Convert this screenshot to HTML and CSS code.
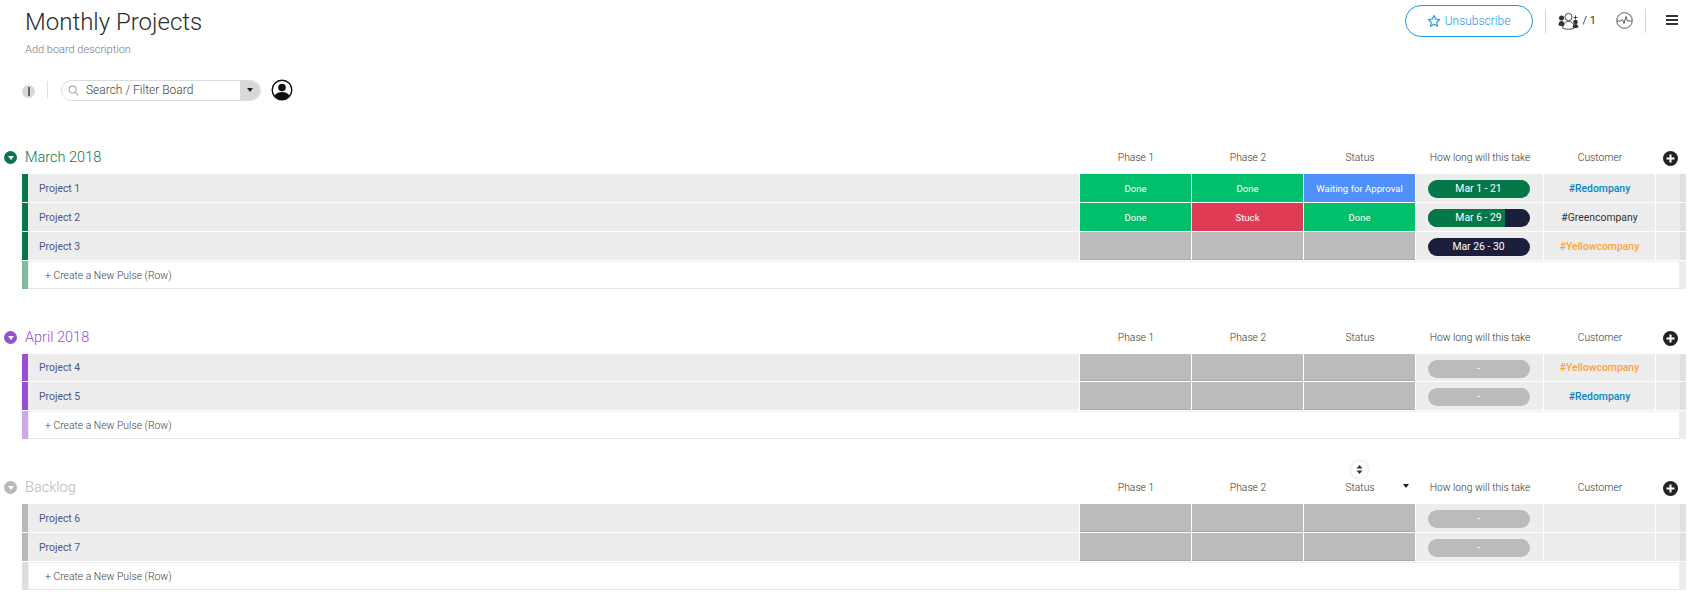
FILE: index.html
```html
<!DOCTYPE html>
<html lang="en">
<head>
    <meta charset="UTF-8">
    <title>Monthly Projects</title>
    <link rel="stylesheet" href="styles.css">
</head>
<body>
    <header class="board-header">
        <div class="board-title">
            <h1>Monthly Projects</h1>
            <p>Add board description</p>
        </div>
        <div class="board-actions">
            <button class="subscribe">
                <svg width="14" height="14" viewBox="0 0 24 24" fill="none" stroke="#1b9ae4" stroke-width="2" stroke-linejoin="round"><path d="M12 2.5l2.9 6.2 6.8.8-5 4.6 1.3 6.7-6-3.4-6 3.4 1.3-6.7-5-4.6 6.8-.8z"/></svg>
                Unsubscribe
            </button>
            <span class="divider"></span>
            <svg class="people" width="21" height="20" viewBox="0 0 21 20">
                <circle cx="10.5" cy="6" r="3.6" fill="none" stroke="#333" stroke-width="0.9"/>
                <path d="M4.5 17c1-5 3-6.5 6-6.5s5 1.500 6 6.500c-3.500 1.700-8.500 1.700-12 0z" fill="none" stroke="#333" stroke-width="0.9"/>
                <circle cx="3.500" cy="7" r="2.500" fill="#333"/>
                <path d="M0.500 14c0-2.500 1.300-4 3-4s3 1.500 3 4c-1 1.500-5 1.500-6 0z" fill="#333"/>
                <circle cx="17.500" cy="11" r="2.300" fill="#333"/>
                <path d="M14.500 16c.5-2 1.500-3 3-3s2.500 1 3 3c-1 1.300-5 1.300-6 0z" fill="#333"/>
                <path d="M17.500 4.500v4M15.500 6.500h4" stroke="#333" stroke-width="0.9"/>
            </svg>
            <span class="people-count">/ 1</span>
            <svg class="pulse" width="17" height="17" viewBox="0 0 17 17" fill="none" stroke="#333" stroke-width="0.8">
                <circle cx="8.500" cy="8.500" r="7.800"/>
                <path d="M1 9h4l1.500-1.500 1.500 4 2-7 1.500 4.500h4.500"/>
            </svg>
            <span class="divider"></span>
            <div class="hamburger"><i></i><i></i><i></i></div>
        </div>
    </header>

    <div class="toolbar">
        <span class="info-btn"><i></i></span>
        <span class="toolbar-divider"></span>
        <div class="search">
            <svg width="11" height="11" viewBox="0 0 12 12" fill="none" stroke="#aaa" stroke-width="1.200"><circle cx="5" cy="5" r="3.800"/><path d="M8 8l3.300 3.300"/></svg>
            <span class="search-text">Search / Filter Board</span>
            <span class="search-drop"><i class="caret"></i></span>
        </div>
        <svg class="person" width="22" height="22" viewBox="0 0 22 22">
            <circle cx="11" cy="11" r="9.800" fill="#fff" stroke="#111" stroke-width="1.400"/>
            <circle cx="11" cy="8.500" r="3.800" fill="#111"/>
            <path d="M3.500 17c1.500-3 4-4 7.500-4s6 1 7.500 4c-2 2.700-4.500 4-7.500 4s-5.500-1.300-7.500-4z" fill="#111"/>
        </svg>
    </div>

    <section class="group group-march">
        <div class="group-head">
            <div class="group-name">
                <span class="toggle"><i></i></span>
                <h2>March 2018</h2>
            </div>
            <span>Phase 1</span><span>Phase 2</span><span>Status</span><span>How long will this take</span><span>Customer</span>
            <span class="add"><svg width="15" height="15" viewBox="0 0 15 15"><circle cx="7.500" cy="7.500" r="7.500" fill="#222"/><path d="M7.500 3.500v8M3.500 7.500h8" stroke="#fff" stroke-width="2"/></svg></span>
        </div>
        <div class="row">
            <div class="cell name">Project 1</div>
            <div class="cell status done">Done</div>
            <div class="cell status done">Done</div>
            <div class="cell status waiting">Waiting for Approval</div>
            <div class="cell"><div class="timeline green">Mar 1 - 21</div></div>
            <div class="cell customer red">#Redompany</div>
            <div class="cell end"></div>
        </div>
        <div class="row">
            <div class="cell name">Project 2</div>
            <div class="cell status done">Done</div>
            <div class="cell status stuck">Stuck</div>
            <div class="cell status done">Done</div>
            <div class="cell"><div class="timeline navy"><span class="fill" style="width: 76%"></span><b>Mar 6 - 29</b></div></div>
            <div class="cell customer">#Greencompany</div>
            <div class="cell end"></div>
        </div>
        <div class="row">
            <div class="cell name">Project 3</div>
            <div class="cell status empty"></div>
            <div class="cell status empty"></div>
            <div class="cell status empty"></div>
            <div class="cell"><div class="timeline navy">Mar 26 - 30</div></div>
            <div class="cell customer yellow">#Yellowcompany</div>
            <div class="cell end"></div>
        </div>
        <div class="create"><div class="create-text">+ Create a New Pulse (Row)</div></div>
    </section>

    <section class="group group-april">
        <div class="group-head">
            <div class="group-name">
                <span class="toggle"><i></i></span>
                <h2>April 2018</h2>
            </div>
            <span>Phase 1</span><span>Phase 2</span><span>Status</span><span>How long will this take</span><span>Customer</span>
            <span class="add"><svg width="15" height="15" viewBox="0 0 15 15"><circle cx="7.500" cy="7.500" r="7.500" fill="#222"/><path d="M7.500 3.500v8M3.500 7.500h8" stroke="#fff" stroke-width="2"/></svg></span>
        </div>
        <div class="row">
            <div class="cell name">Project 4</div>
            <div class="cell status empty"></div>
            <div class="cell status empty"></div>
            <div class="cell status empty"></div>
            <div class="cell"><div class="timeline none">-</div></div>
            <div class="cell customer yellow">#Yellowcompany</div>
            <div class="cell end"></div>
        </div>
        <div class="row">
            <div class="cell name">Project 5</div>
            <div class="cell status empty"></div>
            <div class="cell status empty"></div>
            <div class="cell status empty"></div>
            <div class="cell"><div class="timeline none">-</div></div>
            <div class="cell customer red">#Redompany</div>
            <div class="cell end"></div>
        </div>
        <div class="create"><div class="create-text">+ Create a New Pulse (Row)</div></div>
    </section>

    <section class="group group-backlog">
        <div class="group-head">
            <div class="group-name">
                <span class="toggle"><i></i></span>
                <h2>Backlog</h2>
            </div>
            <span>Phase 1</span><span>Phase 2</span>
            <span class="sortable">Status
                <span class="sort-btn"><svg width="7" height="9" viewBox="0 0 7 9" fill="#333"><path d="M3.500 0l3 3.500h-6zM3.500 9l3-3.500h-6z"/></svg></span>
                <i class="caret col-caret"></i>
            </span>
            <span>How long will this take</span><span>Customer</span>
            <span class="add"><svg width="15" height="15" viewBox="0 0 15 15"><circle cx="7.500" cy="7.500" r="7.500" fill="#222"/><path d="M7.500 3.500v8M3.500 7.500h8" stroke="#fff" stroke-width="2"/></svg></span>
        </div>
        <div class="row">
            <div class="cell name">Project 6</div>
            <div class="cell status empty"></div>
            <div class="cell status empty"></div>
            <div class="cell status empty"></div>
            <div class="cell"><div class="timeline none">-</div></div>
            <div class="cell customer"></div>
            <div class="cell end"></div>
        </div>
        <div class="row">
            <div class="cell name">Project 7</div>
            <div class="cell status empty"></div>
            <div class="cell status empty"></div>
            <div class="cell status empty"></div>
            <div class="cell"><div class="timeline none">-</div></div>
            <div class="cell customer"></div>
            <div class="cell end"></div>
        </div>
        <div class="create"><div class="create-text">+ Create a New Pulse (Row)</div></div>
    </section>
</body>
</html>
```

FILE: styles.css
```css
* {
    box-sizing: border-box;
}

body {
    margin: 0;
    background: #fff;
    font-family: Roboto, "Liberation Sans", sans-serif;
    color: #333;
    overflow: hidden;
}

/* top of the board */
.board-header {
    display: flex;
    justify-content: space-between;
    height: 72px;
    padding: 5px 26px 0 25px;
}

.board-title h1 {
    margin: 0;
    font-size: 24px;
    font-weight: 300;
    line-height: 34px;
    color: #2b2b2b;
}

.board-title p {
    margin: 4px 0 0;
    font-size: 11px;
    font-weight: 300;
    line-height: 14px;
    color: #777;
}

.board-actions {
    display: flex;
    align-items: center;
    height: 31px;
}

.subscribe {
    display: flex;
    align-items: center;
    justify-content: center;
    gap: 4px;
    width: 128px;
    height: 32px;
    padding: 0;
    background: #fff;
    border: 1px solid #1b9ae4;
    border-radius: 16px;
    font-family: inherit;
    font-size: 12px;
    font-weight: 300;
    color: #1b9ae4;
}

.divider {
    width: 1px;
    height: 24px;
    margin: 0 12px;
    background: #d5d5d5;
}

.people-count {
    margin: 0 20px 0 4px;
    font-size: 11px;
    color: #333;
}

.hamburger {
    width: 12px;
    margin-left: 8px;
}

.hamburger i {
    display: block;
    height: 2px;
    margin-bottom: 2px;
    background: #333;
}

/* search row */
.toolbar {
    display: flex;
    align-items: center;
    height: 30px;
    padding: 0 0 0 22px;
    margin-top: 3px;
}

.info-btn {
    display: flex;
    align-items: center;
    justify-content: center;
    width: 13px;
    height: 13px;
    margin-top: 3px;
    background: #d8d8d8;
    border-radius: 50%;
}

.info-btn i {
    width: 2px;
    height: 9px;
    background: #666;
}

.toolbar-divider {
    width: 1px;
    height: 18px;
    margin: 0 13px 0 12px;
    background: #e0e0e0;
}

.search {
    display: flex;
    align-items: center;
    width: 200px;
    height: 21px;
    padding-left: 6px;
    border: 1px solid #dcdcdc;
    border-radius: 11px;
    overflow: hidden;
}

.search-text {
    flex: 1;
    margin-left: 7px;
    font-size: 12px;
    font-weight: 300;
    color: #444;
}

.search-drop {
    display: flex;
    align-items: center;
    justify-content: center;
    width: 20px;
    height: 21px;
    background: #d8d8d8;
}

.caret {
    display: block;
    width: 0;
    height: 0;
    border-left: 3.500px solid transparent;
    border-right: 3.500px solid transparent;
    border-top: 4px solid #222;
}

.person {
    margin-left: 10px;
}

/* groups */
.group {
    --main: #05784a;
    --light: #82bba0;
}

.group-march {
    margin-top: 35px;
}

.group-april {
    --main: #9650d6;
    --light: #cda9ea;
    margin-top: 31px;
}

.group-backlog {
    --main: #b8b8b8;
    --light: #dedede;
    margin-top: 31px;
}

.group-head {
    display: grid;
    grid-template-columns: 1076px 112px 112px 112px 128px 112px 30px;
    align-items: center;
    height: 34px;
    padding-left: 4px;
    font-size: 10.300px;
    font-weight: 300;
    text-align: center;
    color: #333;
}

.group-head > span {
    padding-top: 1px;
}

.group-name {
    display: flex;
    align-items: center;
    text-align: left;
}

.toggle {
    display: flex;
    align-items: center;
    justify-content: center;
    width: 13px;
    height: 13px;
    background: var(--main);
    border-radius: 50%;
}

.toggle i {
    width: 0;
    height: 0;
    margin-top: 2px;
    border-left: 3.500px solid transparent;
    border-right: 3.500px solid transparent;
    border-top: 4px solid #fff;
}

.group-name h2 {
    margin: 0 0 0 8px;
    font-size: 14.500px;
    font-weight: 300;
    color: var(--main);
}

.group-head > .add {
    display: flex;
    justify-content: flex-start;
    padding: 3px 0 0 7px;
}

.sortable {
    position: relative;
}

.sort-btn {
    position: absolute;
    top: -19px;
    left: 47px;
    display: flex;
    align-items: center;
    justify-content: center;
    width: 17px;
    height: 17px;
    background: #fff;
    border-radius: 50%;
    box-shadow: 0 0 3px rgba(0, 0, 0, 0.2);
}

.col-caret {
    position: absolute;
    top: 4px;
    right: 7px;
}

.row {
    display: grid;
    grid-template-columns: 1051px 111px 111px 111px 127px 111px 30px;
    column-gap: 1px;
    height: 28px;
    margin: 0 0 1px 22px;
    border-left: 6px solid var(--main);
}

.group-april .row:nth-child(2) {
    height: 27px;
}

.cell {
    display: flex;
    align-items: center;
    justify-content: center;
    min-width: 0;
    background: #ededed;
    font-size: 10.400px;
    color: #333;
}

.cell.name {
    justify-content: flex-start;
    padding-left: 11px;
    color: #4c5789;
}

.status {
    color: #fff;
    font-size: 9.600px;
    font-weight: 400;
}

.done {
    background: #00c06b;
}

.stuck {
    background: #e03b55;
}

.waiting {
    background: #4f90fc;
}

.empty {
    background: #bbb;
    border-bottom: 1px solid #a8a8a8;
}

.timeline {
    position: relative;
    width: 102px;
    height: 18px;
    margin: 2px 2px 0 0;
    border-radius: 9px;
    overflow: hidden;
    font-size: 10.400px;
    line-height: 18px;
    text-align: center;
    color: #fff;
}

.timeline b {
    position: relative;
    font-weight: 400;
}

.fill {
    position: absolute;
    top: 0;
    bottom: 0;
    left: 0;
    background: #05784a;
}

.green {
    background: #05784a;
}

.navy {
    background: #1c1f3b;
}

.none {
    background: #bbb;
}

.customer.red {
    color: #0a83c6;
    font-weight: 500;
}

.customer.yellow {
    color: #fda33a;
    font-weight: 500;
}

.end {
    border-right: 6px solid #e0e0e0;
}

.create {
    height: 28px;
    margin-left: 22px;
    width: 1664px;
    padding: 0 7px 0 1px;
    border-left: 6px solid var(--light);
    background: #ececec;
}

.create-text {
    height: 28px;
    padding-left: 16px;
    background: #fff;
    border-top: 1px solid #eee;
    border-bottom: 1px solid #e6e6e6;
    font-size: 10.400px;
    font-weight: 300;
    line-height: 28px;
    color: #444;
}
```
